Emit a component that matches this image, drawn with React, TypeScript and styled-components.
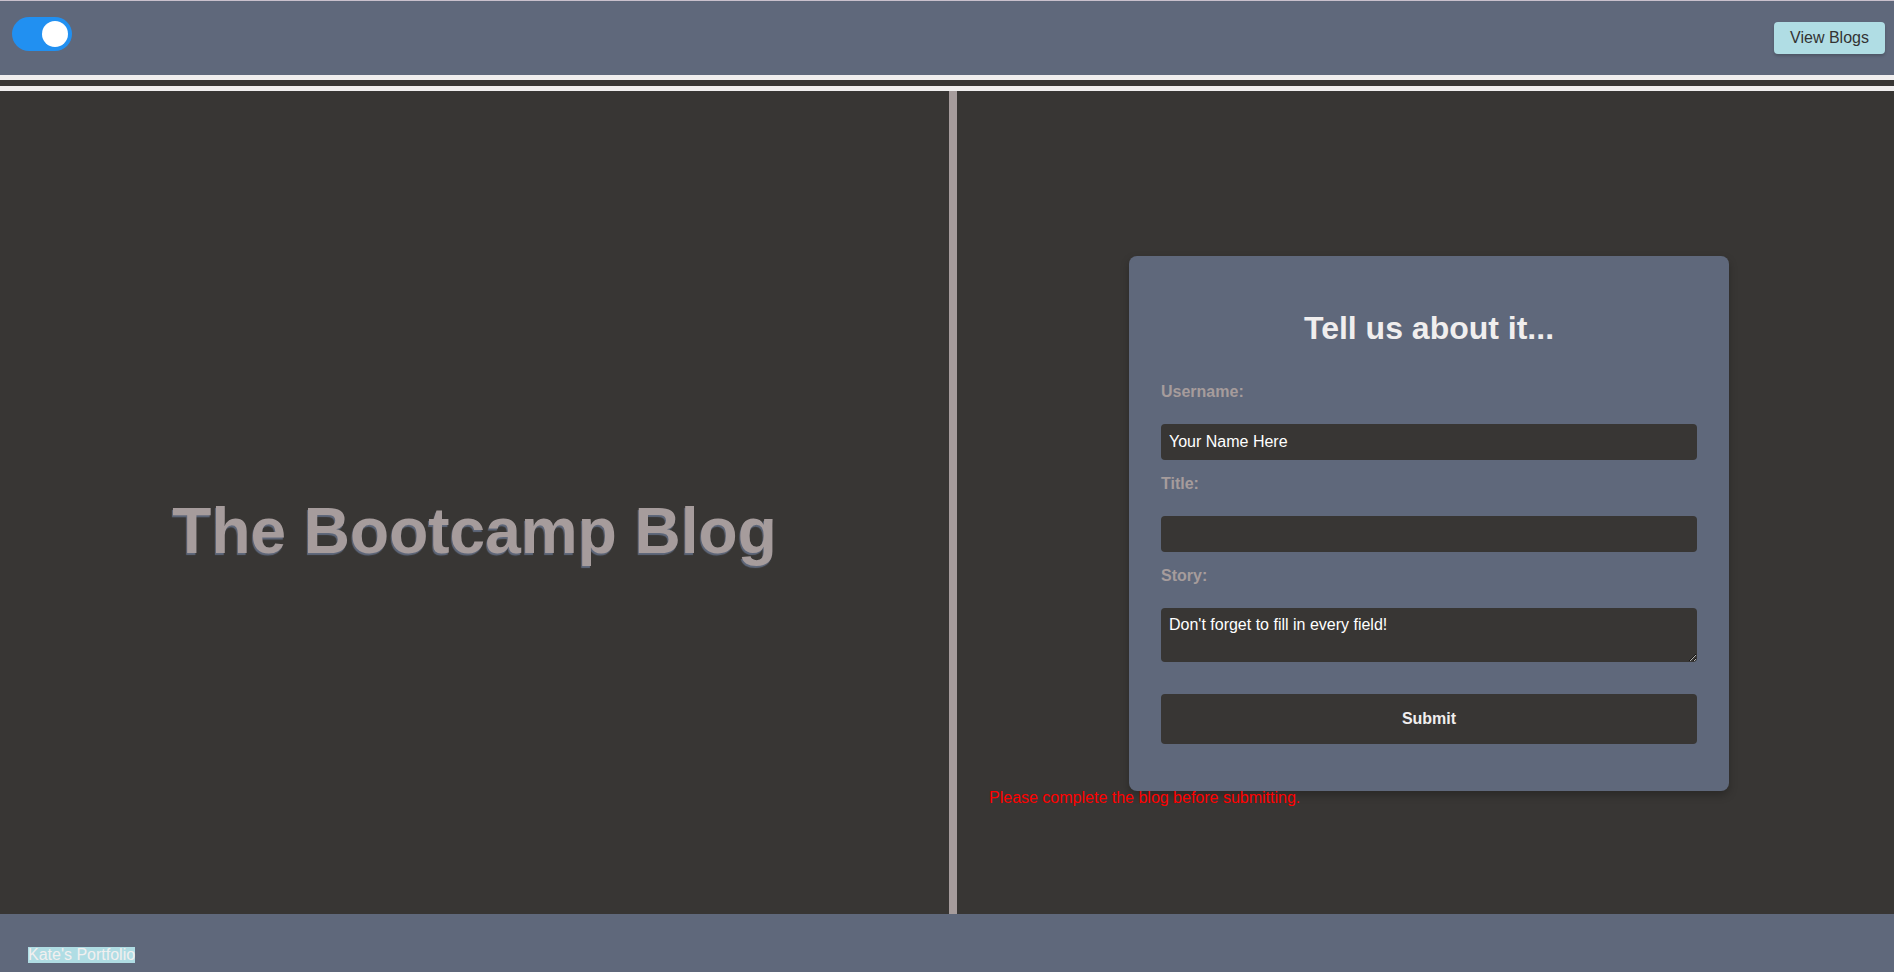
import React from "react";
import styled, { createGlobalStyle } from "styled-components";

const GlobalStyle = createGlobalStyle`
  html, body { margin: 0; padding: 0; background: #383634; }
  body { font-family: "Liberation Sans", Arial, sans-serif; }
  * { box-sizing: border-box; }
`;

const SANS = `"Liberation Sans", Arial, Helvetica, sans-serif`;

const Page = styled.div`
  display: flex;
  flex-direction: column;
  min-height: 100vh;
  background: #383634;
`;

const Header = styled.header`
  height: 75px;
  display: flex;
  justify-content: space-between;
  align-items: flex-start;
  background: #5f687b;
  border-top: 1px solid #c9c0cc;
  padding: 0 9px 0 12px;
`;

const Switch = styled.span`
  position: relative;
  display: inline-block;
  width: 60px;
  height: 34px;
  margin-top: 16px;
  border-radius: 17px;
  background: #2190f1;
`;

const Knob = styled.span`
  position: absolute;
  top: 4px;
  left: 30px;
  width: 26px;
  height: 26px;
  border-radius: 50%;
  background: #ffffff;
`;

const NavButton = styled.button`
  margin-top: 21px;
  width: 111px;
  height: 32px;
  border: none;
  border-radius: 4px;
  background: #b0dde4;
  color: #333333;
  font-family: ${SANS};
  font-size: 16px;
  box-shadow: 0 2px 3px rgba(0, 0, 0, 0.18);
  cursor: pointer;
`;

const Rule = styled.div`
  height: 16px;
  background: #383634;
  border-top: 5px solid #f0eeee;
  border-bottom: 5px solid #f0eeee;
`;

const Main = styled.main`
  flex: 1;
  display: grid;
  grid-template-columns: 949px 8px 1fr;
  min-height: 823px;
`;

const LeftPanel = styled.section`
  display: flex;
  align-items: center;
  justify-content: center;
  padding-top: 56px;
`;

const BigTitle = styled.h1`
  margin: 0;
  font-family: ${SANS};
  font-weight: 700;
  font-size: 64px;
  line-height: 74px;
  color: #a69c9c;
  text-shadow: -1px 2px 1px #5f687b;
`;

const Divider = styled.div`
  background: #a69c9c;
`;

const RightPanel = styled.section`
  display: flex;
  flex-direction: column;
  align-items: flex-start;
  padding: 165px 0 0 32px;
`;

const Card = styled.form`
  width: 600px;
  margin-left: 140px;
  padding: 53px 32px 47px;
  background: #5f687b;
  border-radius: 8px;
  box-shadow: 0 4px 8px rgba(0, 0, 0, 0.25);
  display: flex;
  flex-direction: column;
`;

const CardTitle = styled.h2`
  margin: 0 0 21px;
  text-align: center;
  font-family: ${SANS};
  font-weight: 700;
  font-size: 32px;
  line-height: 38px;
  color: #f0eeee;
`;

const Label = styled.label`
  display: block;
  margin: 15px 0 23px;
  font-family: ${SANS};
  font-weight: 700;
  font-size: 16px;
  line-height: 18px;
  color: #a69c9c;
`;

const TextInput = styled.input`
  width: 100%;
  height: 36px;
  padding: 0 8px;
  border: none;
  border-radius: 4px;
  background: #383634;
  color: #ffffff;
  font-family: ${SANS};
  font-size: 16px;
  outline: none;
`;

const StoryArea = styled.textarea`
  width: 100%;
  height: 54px;
  padding: 8px 8px;
  border: none;
  border-radius: 4px;
  background: #383634;
  color: #ffffff;
  font-family: ${SANS};
  font-size: 16px;
  outline: none;
  resize: vertical;
`;

const SubmitButton = styled.button`
  margin-top: 32px;
  width: 100%;
  height: 50px;
  border: none;
  border-radius: 4px;
  background: #383634;
  color: #f0eeee;
  font-family: ${SANS};
  font-weight: 700;
  font-size: 16px;
`;

const ErrorText = styled.p`
  margin: -2px 0 0;
  font-family: ${SANS};
  font-size: 16px;
  color: #ff0000;
`;

const Footer = styled.footer`
  height: 58px;
  padding: 32px 0 0 28px;
  background: #5f687b;
`;

const FooterLink = styled.a`
  display: inline-block;
  line-height: 16px;
  font-family: ${SANS};
  font-size: 16px;
  color: #f2f0f0;
  background: #b0dde4;
  text-decoration: none;
`;

export default function App() {
  return (
    <Page>
      <GlobalStyle />
      <Header>
        <Switch aria-label="theme toggle">
          <Knob />
        </Switch>
        <NavButton>View Blogs</NavButton>
      </Header>
      <Rule />
      <Main>
        <LeftPanel>
          <BigTitle>The Bootcamp Blog</BigTitle>
        </LeftPanel>
        <Divider />
        <RightPanel>
          <Card onSubmit={(e) => e.preventDefault()}>
            <CardTitle>Tell us about it...</CardTitle>
            <Label htmlFor="username">Username:</Label>
            <TextInput id="username" defaultValue="Your Name Here" />
            <Label htmlFor="title">Title:</Label>
            <TextInput id="title" defaultValue="" />
            <Label htmlFor="story">Story:</Label>
            <StoryArea id="story" defaultValue="Don't forget to fill in every field!" />
            <SubmitButton type="submit">Submit</SubmitButton>
          </Card>
          <ErrorText>Please complete the blog before submitting.</ErrorText>
        </RightPanel>
      </Main>
      <Footer>
        <FooterLink href="#">Kate's Portfolio</FooterLink>
      </Footer>
    </Page>
  );
}
